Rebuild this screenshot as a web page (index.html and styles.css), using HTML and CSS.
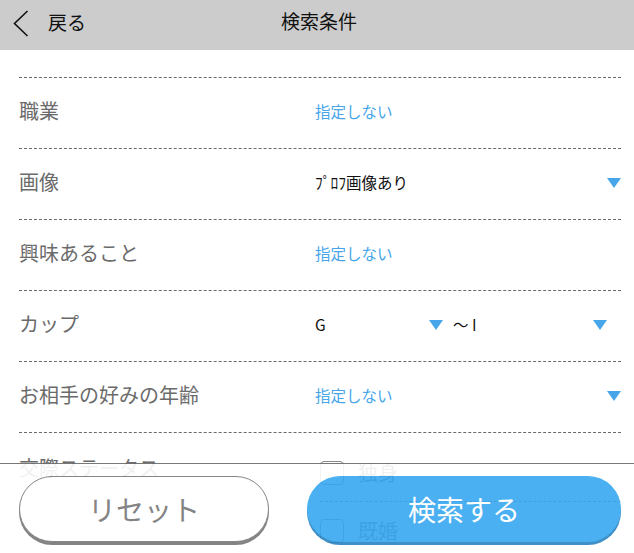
FILE: index.html
```html
<!DOCTYPE html>
<html lang="ja">
<head>
    <meta charset="UTF-8">
    <meta name="viewport" content="width=device-width, initial-scale=1.0">
    <title>検索条件</title>
    <link rel="stylesheet" href="styles.css">
</head>
<body>
    <header class="topbar">
        <a class="back" href="#">
            <svg class="back-icon" width="16" height="28" viewBox="0 0 16 28">
                <polyline points="14.5,1 1.5,13.5 14.5,26" fill="none" stroke="#111" stroke-width="1.6"/>
            </svg>
            <span>戻る</span>
        </a>
        <h1 class="title">検索条件</h1>
    </header>

    <main class="conditions">
        <div class="row">
            <div class="label">職業</div>
            <div class="value"><span class="unset">指定しない</span></div>
        </div>
        <div class="row">
            <div class="label">画像</div>
            <div class="value select">
                <span class="picked">ﾌﾟﾛﾌ画像あり</span>
                <span class="arrow"></span>
            </div>
        </div>
        <div class="row">
            <div class="label">興味あること</div>
            <div class="value"><span class="unset">指定しない</span></div>
        </div>
        <div class="row">
            <div class="label">カップ</div>
            <div class="value range">
                <div class="select half">
                    <span class="picked">G</span>
                    <span class="arrow"></span>
                </div>
                <span class="tilde">～ I</span>
                <div class="select half half-end">
                    <span class="picked"></span>
                    <span class="arrow"></span>
                </div>
            </div>
        </div>
        <div class="row">
            <div class="label">お相手の好みの年齢</div>
            <div class="value select">
                <span class="unset">指定しない</span>
                <span class="arrow"></span>
            </div>
        </div>
        <div class="row row-top">
            <div class="label">交際ステータス</div>
            <div class="value checks">
                <label class="check"><span class="box"></span>独身</label>
                <label class="check"><span class="box"></span>既婚</label>
            </div>
        </div>
    </main>

    <footer class="actions">
        <button class="btn btn-reset" type="button">リセット</button>
        <button class="btn btn-search" type="button">検索する</button>
    </footer>
</body>
</html>
```

FILE: styles.css
```css
body {
    font-family: "Noto Sans CJK JP", "Noto Sans", sans-serif;
    margin: 0;
    padding: 0;
    background: #fff;
    color: #111;
}

.topbar {
    height: 50px;
    background: #cbcccb;
    display: flex;
    align-items: center;
    position: relative;
}

.back {
    display: flex;
    align-items: center;
    gap: 19px;
    padding-left: 13px;
    padding-bottom: 3px;
    color: #111;
    text-decoration: none;
    font-size: 19px;
}

.back span {
    margin-top: -5px;
}

.back-icon {
    display: block;
}

.title {
    position: absolute;
    left: 281px;
    top: 0;
    margin: 0;
    line-height: 42px;
    font-size: 19px;
    font-weight: normal;
}

.conditions {
    padding: 27px 13px 120px 19px;
}

.row {
    display: flex;
    align-items: center;
    height: 70px;
    border-top: 1px dashed #6a6a6a;
}

.row-top {
    align-items: flex-start;
    height: auto;
}

.label {
    width: 296px;
    flex-shrink: 0;
    font-size: 20px;
    color: #6b6b6b;
    padding-bottom: 6px;
}

.row-top .label {
    padding-top: 20px;
}

.value {
    flex: 1;
    display: flex;
    align-items: center;
    font-size: 15.5px;
    padding-bottom: 4px;
}

.unset {
    color: #47a6ea;
}

.picked {
    color: #111;
}

.select {
    justify-content: space-between;
}

.arrow {
    width: 0;
    height: 0;
    border-left: 7.5px solid transparent;
    border-right: 7.5px solid transparent;
    border-top: 10px solid #47a6ea;
    margin-top: 2px;
}

.range {
    gap: 10px;
}

.half {
    display: flex;
    align-items: center;
    justify-content: space-between;
    width: 128px;
}

.half-end {
    width: 120px;
    margin-left: auto;
    margin-right: 17px;
}

.tilde {
    font-size: 15.5px;
    color: #111;
    white-space: nowrap;
}

.checks {
    flex-direction: column;
    align-items: stretch;
    padding-top: 11px;
    padding-left: 5px;
}

.check {
    display: flex;
    align-items: center;
    gap: 14px;
    height: 57px;
    font-size: 20px;
    color: #6b6b6b;
}

.check:first-child {
    border-bottom: 1px dashed #6a6a6a;
}

.box {
    width: 22px;
    height: 22px;
    border: 1px solid #888;
    border-radius: 4px;
}

.actions {
    position: fixed;
    left: 0;
    right: 0;
    bottom: 0;
    height: 90px;
    border-top: 1px solid #6a6a6a;
    background: #fff;
    opacity: 0.9;
    display: flex;
    justify-content: space-between;
    padding: 12px 13px 0 19px;
    box-sizing: border-box;
}

.btn {
    height: 66px;
    border-radius: 33px;
    font-family: "Noto Sans CJK JP", "Noto Sans", sans-serif;
    font-size: 28px;
    cursor: pointer;
}

.btn-reset {
    width: 250px;
    background: #fff;
    color: #777;
    border: 1px solid #7a7a7a;
    box-shadow: 0 3px 0 #777;
}

.btn-search {
    width: 314px;
    background: #38a8f0;
    color: #fff;
    border: none;
    box-shadow: 0 3px 0 #2a84c2;
}
```
